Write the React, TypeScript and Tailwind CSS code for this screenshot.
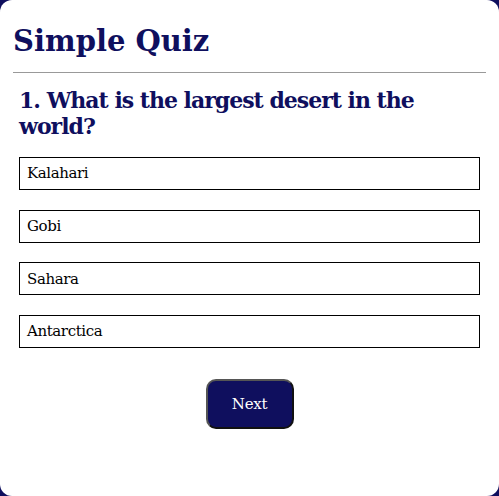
const options = ["Kalahari", "Gobi", "Sahara", "Antarctica"];

export default function App() {
  return (
    <div className="min-h-screen bg-[#0f0f5e] font-['DejaVu_Serif',serif]">
      <div className="h-[496px] rounded-[12px] bg-white px-[13px] pt-[22px]">
        <h1 className="text-[29px] font-bold leading-[38px] text-[#0f0f5e]">Simple Quiz</h1>
        <hr className="mt-[12px] border-t border-[#999]" />
        <div className="px-[6px]">
          <h2 className="mt-[14px] text-[22px] font-bold leading-[26px] tracking-[-1px] text-[#0f0f5e]">
            1. What is the largest desert in the world?
          </h2>
          <div className="mt-[18px] flex flex-col gap-[19.67px]">
            {options.map((opt) => (
              <div
                key={opt}
                className="flex h-[33px] items-center border border-black pl-[7px] text-[15px] tracking-[-0.4px] text-black"
              >
                {opt}
              </div>
            ))}
          </div>
          <div className="mt-[31px] flex justify-center">
            <button className="h-[50px] w-[88px] rounded-[10px] border-2 border-t-[#555] border-l-[#555] border-b-[#111] border-r-[#111] bg-[#0f0f5e] text-[15px] tracking-[-0.3px] text-white">
              Next
            </button>
          </div>
        </div>
      </div>
    </div>
  );
}
